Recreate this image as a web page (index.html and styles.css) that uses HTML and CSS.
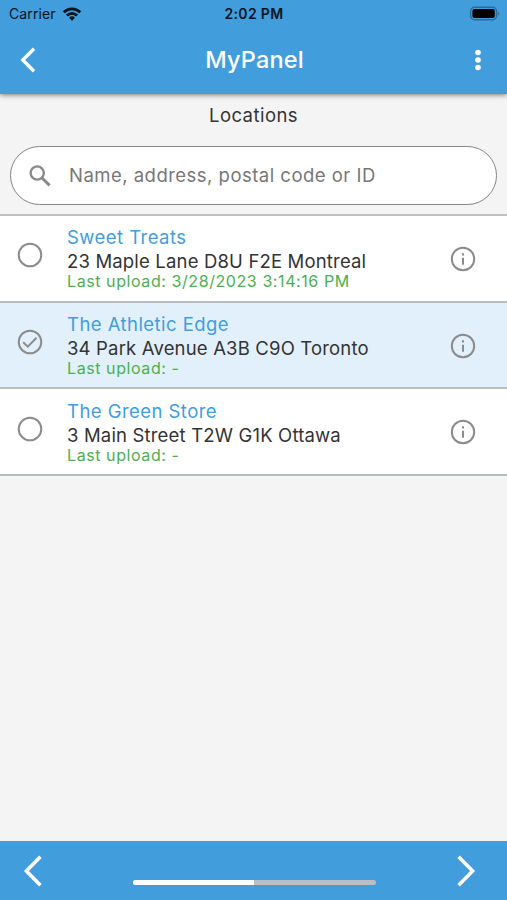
FILE: index.html
```html
<!DOCTYPE html>
<html lang="en">
<head>
<meta charset="UTF-8">
<title>MyPanel - Locations</title>
<link rel="stylesheet" href="styles.css">
</head>
<body>
<div class="app">
  <header class="header">
    <div class="status-bar">
      <div class="carrier">
        <span>Carrier</span>
        <svg width="20" height="14" viewBox="0 0 20 14" fill="none" stroke="#06131c" stroke-width="2.8">
          <path d="M1.8 5.2a11.6 11.6 0 0 1 16.4 0"/>
          <path d="M4.9 8.4a7.2 7.2 0 0 1 10.2 0"/>
          <path d="M10 13.8l-2.9-3a4.1 4.1 0 0 1 5.8 0z" fill="#06131c" stroke="none"/>
        </svg>
      </div>
      <span class="time">2:02 PM</span>
      <svg class="battery" width="32" height="16" viewBox="0 0 32 16">
        <rect x="1.6" y="1.2" width="26" height="12.6" rx="4" fill="none" stroke="#2b6b98" stroke-width="1.4"/>
        <rect x="3.4" y="3" width="22.4" height="9" rx="2" fill="#000"/>
        <path d="M29.2 5.5q2.2 2 0 4z" fill="#2b6b98"/>
      </svg>
    </div>
    <div class="nav-bar">
      <button class="icon-button" aria-label="Back">
        <svg width="16" height="26" viewBox="0 0 16 26" fill="none" stroke="#fff" stroke-width="3.4"><path d="M14 1.8L2.8 13 14 24.2"/></svg>
      </button>
      <h1>MyPanel</h1>
      <button class="icon-button" aria-label="Menu">
        <svg width="8" height="22" viewBox="0 0 8 22" fill="#fff"><circle cx="4" cy="3.5" r="2.8"/><circle cx="4" cy="11" r="2.8"/><circle cx="4" cy="18.5" r="2.8"/></svg>
      </button>
    </div>
  </header>

  <main>
    <h2>Locations</h2>
    <div class="search">
      <svg width="22" height="22" viewBox="0 0 22 22" fill="none" stroke="#8b8b8b"><circle cx="8.2" cy="8" r="6.6" stroke-width="2.4"/><path d="M13 13l7.6 7.4" stroke-width="3"/></svg>
      <input type="text" placeholder="Name, address, postal code or ID">
    </div>
    <ul class="locations">
      <li>
        <svg class="check" width="26" height="26" viewBox="0 0 26 26"><circle cx="13" cy="13" r="11.3"/></svg>
        <div class="details">
          <p class="name">Sweet Treats</p>
          <p class="address">23 Maple Lane D8U F2E Montreal</p>
          <p class="upload">Last upload: 3/28/2023 3:14:16 PM</p>
        </div>
        <svg class="info" width="26" height="26" viewBox="0 0 26 26"><circle cx="13" cy="13" r="11.2"/><path d="M13 11.7v7M13 7.2v2.2"/></svg>
      </li>
      <li class="selected">
        <svg class="check" width="26" height="26" viewBox="0 0 26 26"><circle cx="13" cy="13" r="11.3"/><path d="M6.2 13.2l4.6 4.4 8.7-8.8"/></svg>
        <div class="details">
          <p class="name">The Athletic Edge</p>
          <p class="address">34 Park Avenue A3B C9O Toronto</p>
          <p class="upload">Last upload: -</p>
        </div>
        <svg class="info" width="26" height="26" viewBox="0 0 26 26"><circle cx="13" cy="13" r="11.2"/><path d="M13 11.7v7M13 7.2v2.2"/></svg>
      </li>
      <li>
        <svg class="check" width="26" height="26" viewBox="0 0 26 26"><circle cx="13" cy="13" r="11.3"/></svg>
        <div class="details">
          <p class="name">The Green Store</p>
          <p class="address">3 Main Street T2W G1K Ottawa</p>
          <p class="upload">Last upload: -</p>
        </div>
        <svg class="info" width="26" height="26" viewBox="0 0 26 26"><circle cx="13" cy="13" r="11.2"/><path d="M13 11.7v7M13 7.2v2.2"/></svg>
      </li>
    </ul>
  </main>

  <footer class="footer">
    <button class="icon-button" aria-label="Previous">
      <svg width="20" height="32" viewBox="0 0 20 32" fill="none" stroke="#fff" stroke-width="3.6"><path d="M17.4 1.8L3.4 16l14 14.2"/></svg>
    </button>
    <div class="progress"><div class="progress-value"></div></div>
    <button class="icon-button" aria-label="Next">
      <svg width="20" height="32" viewBox="0 0 20 32" fill="none" stroke="#fff" stroke-width="3.6"><path d="M2.6 1.8l14 14.2-14 14.2"/></svg>
    </button>
  </footer>
</div>
</body>
</html>
```
FILE: styles.css
```css
* {
  box-sizing: border-box;
}

body {
  margin: 0;
  font-family: Inter, "Liberation Sans", sans-serif;
  background-color: #f4f4f4;
  color: #333;
}

h1, h2, p, ul {
  margin: 0;
  padding: 0;
}

svg {
  display: block;
  flex-shrink: 0;
}

.app {
  display: flex;
  flex-direction: column;
  height: 900px;
}

.header {
  height: 94px;
  background-color: #429ddd;
  box-shadow: 0 1px 5px rgba(0, 0, 0, 0.5);
}

.status-bar {
  display: grid;
  grid-template-columns: 1fr auto 1fr;
  align-items: center;
  height: 27px;
  padding: 0 6px 0 9px;
  color: #06131c;
  font-size: 14px;
}

.carrier {
  display: flex;
  align-items: center;
  gap: 6px;
  letter-spacing: 0.1px;
}

.time {
  font-weight: 600;
  letter-spacing: 0.35px;
  margin-right: 2px;
}

.battery {
  justify-self: end;
}

.nav-bar {
  display: flex;
  justify-content: space-between;
  align-items: center;
  height: 66px;
  padding: 0 25px 0 20px;
}

.nav-bar h1 {
  margin: 0 1px 2px 0;
  color: #fff;
  font-size: 23.5px;
  font-weight: 500;
  letter-spacing: 0.15px;
}

.icon-button {
  padding: 0;
  border: none;
  background: none;
  cursor: pointer;
}

main {
  flex: 1;
}

main h2 {
  height: 52px;
  padding-top: 9px;
  font-size: 18.5px;
  font-weight: 400;
  line-height: 24px;
  letter-spacing: 0.45px;
  text-align: center;
}

.search {
  display: flex;
  align-items: center;
  gap: 18px;
  height: 59px;
  margin: 0 10px;
  padding: 0 18px;
  border: 1px solid #858585;
  border-radius: 30px;
  background-color: #fff;
}

.search input {
  flex: 1;
  padding: 0 0 2px;
  border: none;
  outline: none;
  font-family: inherit;
  font-size: 18.5px;
  letter-spacing: 0.48px;
}

.search input::placeholder {
  color: #777;
}

.locations {
  margin-top: 9px;
  border-top: 2px solid #c0c0c0;
  list-style: none;
}

.locations li {
  display: flex;
  align-items: center;
  height: 86.7px;
  padding: 0 31px 0 17px;
  border-bottom: 2px solid #b9bdbc;
  background-color: #fff;
}

.locations .selected {
  background-color: #e2f0fb;
}

.check, .info {
  fill: none;
  stroke: #8b8b8b;
  stroke-width: 2;
}

.check {
  margin-top: -6px;
}

.info {
  margin-top: 1px;
}

.details {
  flex: 1;
  padding-left: 24px;
}

.name, .address {
  font-size: 18.5px;
  line-height: 23px;
}

.name {
  color: #429ddd;
  letter-spacing: 0.45px;
}

.address {
  padding-top: 1px;
  letter-spacing: 0.17px;
}

.upload {
  color: #4caf50;
  font-size: 16px;
  line-height: 17px;
  letter-spacing: 0.58px;
}

.footer {
  display: flex;
  justify-content: space-between;
  align-items: center;
  height: 59px;
  padding: 0 31px 0 23px;
  background-color: #429ddd;
}

.progress {
  width: 243px;
  height: 5px;
  margin: 24px 0 0 9px;
  border-radius: 3px;
  background-color: #bbbfc3;
  overflow: hidden;
}

.progress-value {
  width: 50%;
  height: 100%;
  background-color: #fff;
}
```
